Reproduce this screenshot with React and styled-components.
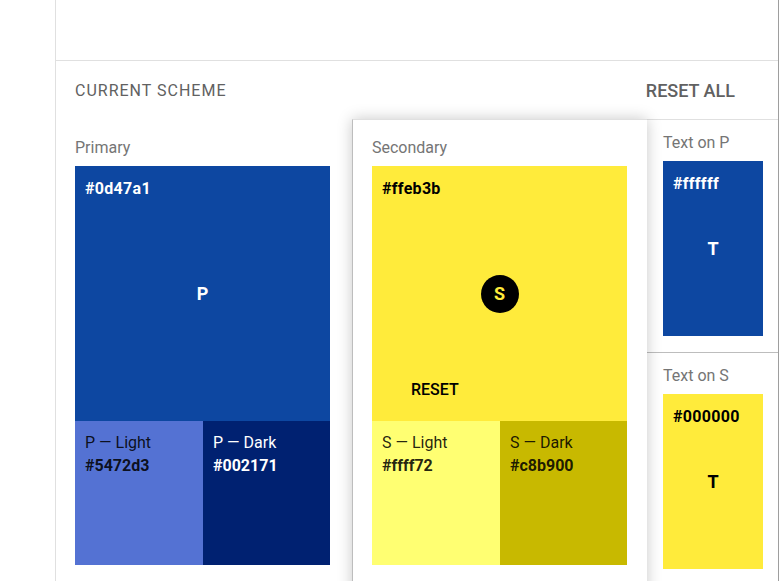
import React from "react";
import styled, { createGlobalStyle } from "styled-components";

const GlobalStyle = createGlobalStyle`
  html, body {
    margin: 0;
    padding: 0;
    background: #fff;
    font-family: Roboto, "Noto Sans", Arial, sans-serif;
    overflow: hidden;
  }
`;

const primary = {
  label: "Primary",
  mark: "P",
  main: { hex: "#0d47a1", ink: "#fff" },
  light: { name: "P — Light", hex: "#5472d3", ink: "rgba(0,0,0,0.87)" },
  dark: { name: "P — Dark", hex: "#002171", ink: "#fff" },
};

const secondary = {
  label: "Secondary",
  mark: "S",
  main: { hex: "#ffeb3b", ink: "#000" },
  light: { name: "S — Light", hex: "#ffff72", ink: "rgba(0,0,0,0.87)" },
  dark: { name: "S — Dark", hex: "#c8b900", ink: "rgba(0,0,0,0.87)" },
};

const textSwatches = [
  { label: "Text on P", bg: "#0d47a1", hex: "#ffffff", ink: "#fff" },
  { label: "Text on S", bg: "#ffeb3b", hex: "#000000", ink: "#000" },
];

const App = () => {
  return (
    <React.Fragment>
      <GlobalStyle />
      <Page>
        <Gutter />
        <Sheet>
          <TopArea />
          <Header>
            <HeaderTitle>Current scheme</HeaderTitle>
            <TextButton>Reset all</TextButton>
          </Header>
          <Columns>
            <SchemeColumn scheme={primary} />
            <SchemeColumn scheme={secondary} raised />
            <TextColumn>
              {textSwatches.map((t) => (
                <TextBlock key={t.label}>
                  <Label>{t.label}</Label>
                  <TextSwatch bg={t.bg} ink={t.ink}>
                    <Hex>{t.hex}</Hex>
                    <Mark>T</Mark>
                  </TextSwatch>
                </TextBlock>
              ))}
            </TextColumn>
          </Columns>
        </Sheet>
      </Page>
    </React.Fragment>
  );
};

const SchemeColumn = ({ scheme, raised }) => (
  <Column raised={raised}>
    <Label>{scheme.label}</Label>
    <MainSwatch bg={scheme.main.hex} ink={scheme.main.ink}>
      <Hex>{scheme.main.hex}</Hex>
      {raised ? (
        <>
          <Badge>{scheme.mark}</Badge>
          <SwatchButton>Reset</SwatchButton>
        </>
      ) : (
        <Mark>{scheme.mark}</Mark>
      )}
    </MainSwatch>
    <VariantRow>
      {[scheme.light, scheme.dark].map((v) => (
        <Variant key={v.name} bg={v.hex} ink={v.ink}>
          <VariantName>{v.name}</VariantName>
          <VariantHex>{v.hex}</VariantHex>
        </Variant>
      ))}
    </VariantRow>
  </Column>
);

const Page = styled.div`
  display: flex;
  width: 779px;
  height: 581px;
  overflow: hidden;
`;

const Gutter = styled.div`
  width: 55px;
  flex: none;
`;

const Sheet = styled.div`
  width: 722px;
  flex: none;
  border-left: 1px solid #e0e0e0;
  border-right: 1px solid #9e9e9e;
  display: flex;
  flex-direction: column;
`;

const TopArea = styled.div`
  flex: none;
  height: 60px;
  border-bottom: 1px solid #e0e0e0;
`;

const Header = styled.div`
  flex: none;
  height: 58px;
  border-bottom: 1px solid #e0e0e0;
  display: flex;
  align-items: center;
  justify-content: space-between;
  padding: 0 43px 0 19px;
`;

const HeaderTitle = styled.span`
  font-size: 16px;
  letter-spacing: 1px;
  text-transform: uppercase;
  color: #616161;
`;

const TextButton = styled.span`
  font-size: 18px;
  font-weight: 500;
  text-transform: uppercase;
  color: #616161;
`;

const Columns = styled.div`
  display: grid;
  grid-template-columns: 296px 295px 1fr;
  margin-top: -1px;
  flex: none;
  align-items: start;
`;

const Column = styled.div`
  padding: 17px 19px 20px 19px;
  background: #fff;
  min-height: 480px;
  ${(p) =>
    p.raised &&
    `
    position: relative;
    z-index: 1;
    border-left: 1px solid #bdbdbd;
    border-top: 1px solid #e0e0e0;
    box-shadow: 0 0 14px rgba(0, 0, 0, 0.22);
    padding-top: 16px;
  `}
`;

const Label = styled.div`
  font-size: 16px;
  line-height: 24px;
  color: #757575;
  margin-bottom: 6px;
`;

const MainSwatch = styled.div`
  position: relative;
  width: 255px;
  height: 255px;
  background: ${(p) => p.bg};
  color: ${(p) => p.ink};
  display: flex;
  align-items: center;
  justify-content: center;
`;

const Hex = styled.div`
  position: absolute;
  top: 11px;
  left: 10px;
  font-size: 16px;
  letter-spacing: 0.3px;
  line-height: 24px;
  font-weight: 700;
`;

const Mark = styled.div`
  font-size: 18px;
  font-weight: 700;
`;

const Badge = styled.div`
  width: 38px;
  height: 38px;
  border-radius: 50%;
  background: #000;
  color: #ffeb3b;
  font-size: 18px;
  font-weight: 700;
  display: flex;
  align-items: center;
  justify-content: center;
`;

const SwatchButton = styled.div`
  position: absolute;
  left: 23px;
  bottom: 14px;
  height: 36px;
  padding: 0 16px;
  display: flex;
  align-items: center;
  font-size: 16px;
  font-weight: 500;
  text-transform: uppercase;
  color: #000;
`;

const VariantRow = styled.div`
  display: grid;
  grid-template-columns: 128px 127px;
  width: 255px;
`;

const Variant = styled.div`
  height: 144px;
  box-sizing: border-box;
  padding: 10px 10px;
  background: ${(p) => p.bg};
  color: ${(p) => p.ink};
  font-size: 16px;
  line-height: 23px;
`;

const VariantName = styled.div``;

const VariantHex = styled.div`
  font-weight: 700;
`;

const TextColumn = styled.div`
  display: flex;
  flex-direction: column;
`;

const TextBlock = styled.div`
  padding: 12px 15px 16px 16px;
  & + & {
    border-top: 1px solid #bdbdbd;
    padding-top: 11px;
  }
`;

const TextSwatch = styled.div`
  position: relative;
  width: 100px;
  height: 175px;
  background: ${(p) => p.bg};
  color: ${(p) => p.ink};
  display: flex;
  align-items: center;
  justify-content: center;
`;

export default App;
